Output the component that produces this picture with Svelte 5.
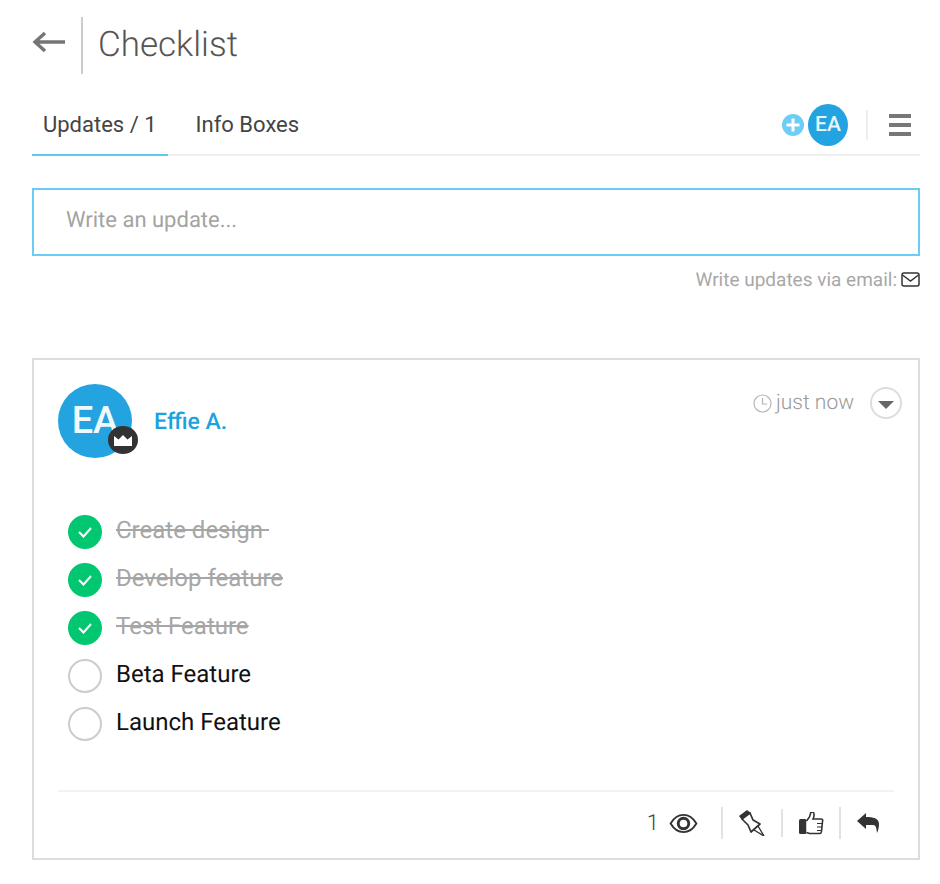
<script>
	const items = [
		{ label: 'Create design ', done: true },
		{ label: 'Develop feature', done: true },
		{ label: 'Test Feature', done: true },
		{ label: 'Beta Feature', done: false },
		{ label: 'Launch Feature', done: false }
	];
</script>

<div class="page">
	<header class="head">
		<svg class="back" width="34" height="24" viewBox="0 0 34 24" aria-hidden="true">
			<path d="M33 12H3M13 3l-10 9 10 9" fill="none" stroke="#757575" stroke-width="3.4" />
		</svg>
		<span class="head-sep"></span>
		<h1>Checklist</h1>
	</header>

	<nav class="tabs">
		<button class="tab active">Updates / 1</button>
		<button class="tab">Info Boxes</button>
		<div class="tab-tools">
			<span class="plus">
				<svg width="14" height="14" viewBox="0 0 14 14" aria-hidden="true">
					<path d="M7 0.5v13M0.5 7h13" stroke="#fff" stroke-width="3" />
				</svg>
			</span>
			<span class="avatar-sm">EA</span>
			<span class="tool-sep"></span>
			<span class="burger"><i></i><i></i><i></i></span>
		</div>
	</nav>

	<div class="composer">Write an update...</div>
	<div class="hint">
		Write updates via email:
		<svg width="19" height="15" viewBox="0 0 19 15" aria-hidden="true">
			<rect x="1" y="1" width="17" height="13" rx="2" fill="none" stroke="#333" stroke-width="1.5" />
			<path d="M1.5 3l8 6 8-6" fill="none" stroke="#333" stroke-width="1.5" />
		</svg>
	</div>

	<article class="card">
		<div class="card-top">
			<div class="avatar">
				EA
				<span class="crown">
					<svg width="18" height="11" viewBox="0 0 18 11" aria-hidden="true">
						<path d="M0 1l4.500 3.500L9 0l4.500 4.500L18 1v10H0z" fill="#fff" />
					</svg>
				</span>
			</div>
			<a class="author" href="#top">Effie A.</a>
			<div class="meta">
				<svg width="19" height="19" viewBox="0 0 19 19" aria-hidden="true">
					<circle cx="9.5" cy="9.5" r="8.5" fill="none" stroke="#b5b5b5" stroke-width="1.2" />
					<path d="M9.5 4v6h4.5" fill="none" stroke="#b5b5b5" stroke-width="1.2" />
				</svg>
				<span class="time">just now</span>
				<span class="caret"><i></i></span>
			</div>
		</div>

		<ul class="list">
			{#each items as item}
				<li class:done={item.done}>
					<span class="mark">
						{#if item.done}
							<svg width="16" height="12" viewBox="0 0 16 12" aria-hidden="true">
								<path d="M2 6l4.500 4.500L14 2" fill="none" stroke="#fff" stroke-width="2" />
							</svg>
						{/if}
					</span>
					<span class="label">{item.label}</span>
				</li>
			{/each}
		</ul>

		<footer class="actions">
			<span class="count">1</span>
			<svg class="eye" width="29" height="21" viewBox="0 0 30 22" aria-hidden="true">
				<path d="M1.5 11C5 5 10 2 15 2s10 3 13.500 9C25 17 20 20 15 20S5 17 1.500 11z" fill="none" stroke="#333" stroke-width="2" />
				<circle cx="15" cy="11" r="5.500" fill="none" stroke="#333" stroke-width="3" />
			</svg>
			<span class="sep"></span>
			<svg class="pin" width="27" height="26" viewBox="4 5 27 26" aria-hidden="true">
				<path d="M5 11l8-6 4 3-9 7z" fill="#333" />
				<path d="M8 14l8-6 3 7 7 4-9 8-3-7z" fill="#fff" stroke="#333" stroke-width="1.700" stroke-linejoin="round" />
				<path d="M20 25l10 6-6-10" fill="none" stroke="#333" stroke-width="1.400" />
			</svg>
			<span class="sep short"></span>
			<svg class="thumb" width="26" height="23" viewBox="4 5 26 23" aria-hidden="true">
				<rect x="5" y="12" width="7.500" height="15" rx="1.500" fill="#333" />
				<path d="M12.500 14l3-4 1.500-5 2.500 0.500c1 2 0.500 4.500-0.500 6.500h8c1.500 0 2 1 1.500 2.500l-1 10c-0.200 1.500-1 2-2 2h-10l-3-1" fill="#fff" stroke="#333" stroke-width="1.600" />
				<path d="M23 16.500h5.500M23 20h5M23 23.500h4.500" fill="none" stroke="#333" stroke-width="1.200" />
			</svg>
			<span class="sep"></span>
			<svg class="reply" width="24" height="22" viewBox="5 4 24 22" aria-hidden="true">
				<path d="M6 13l9-8v4c7 0 13 1 13 7 0 4-1 7-2 9-0.500-5-1-8-4-8h-7v4z" fill="#333" />
			</svg>
		</footer>
	</article>
</div>

<style>
	:global(body) {
		background: #fff;
		font-family: Roboto, 'Liberation Sans', sans-serif;
		text-rendering: geometricPrecision;
	}

	.page {
		box-sizing: border-box;
		width: 940px;
		height: 884px;
		padding: 16px 20px 0 32px;
		overflow: hidden;
	}

	.head {
		display: flex;
		align-items: center;
		height: 58px;
	}
	.back {
		margin-top: -6px;
	}
	.head-sep {
		width: 2px;
		height: 57px;
		margin: 0 15px 0 15px;
		background: #ccc;
	}
	h1 {
		margin: -1px 0 0;
		font-size: 35px;
		font-weight: 300;
		color: #555;
	}

	.tabs {
		display: flex;
		align-items: stretch;
		height: 56px;
		margin-top: 24px;
		border-bottom: 2px solid #eee;
	}
	.tab {
		margin-bottom: -2px;
		padding: 0 11px 4px;
		border: none;
		border-bottom: 2px solid transparent;
		background: none;
		font: 400 22px Roboto, sans-serif;
		color: #444;
	}
	.tab.active {
		border-bottom-color: #5fc8f0;
		margin-right: 17px;
	}
	.tab-tools {
		display: flex;
		align-items: center;
		margin-left: auto;
		padding: 0 9px 2px 0;
	}
	.plus {
		display: flex;
		align-items: center;
		justify-content: center;
		width: 22px;
		height: 22px;
		margin-right: 4px;
		border-radius: 50%;
		background: #6dcdf5;
	}
	.avatar-sm {
		display: flex;
		align-items: center;
		justify-content: center;
		width: 40px;
		height: 42px;
		border-radius: 50%;
		background: #23a4e0;
		color: #e8f5fc;
		font-size: 21px;
		font-weight: 500;
	}
	.tool-sep {
		width: 2px;
		height: 30px;
		margin: 0 21px 0 18px;
		background: #eee;
	}
	.burger {
		display: flex;
		flex-direction: column;
		gap: 5px;
	}
	.burger i {
		display: block;
		width: 22px;
		height: 4px;
		background: #777;
	}

	.composer {
		box-sizing: border-box;
		height: 68px;
		margin-top: 32px;
		padding: 0 32px 4px;
		display: flex;
		align-items: center;
		border: 2px solid #6ccbf2;
		font-size: 22px;
		font-weight: 400;
		color: #a3a3a3;
	}

	.hint {
		display: flex;
		align-items: center;
		justify-content: flex-end;
		gap: 4px;
		height: 24px;
		margin-top: 11px;
		padding-bottom: 1px;
		font-size: 19px;
		color: #a8a8a8;
	}

	.card {
		box-sizing: border-box;
		height: 502px;
		margin-top: 66px;
		padding: 24px 24px 0;
		border: 2px solid #ddd;
	}
	.card-top {
		display: flex;
		align-items: flex-start;
	}
	.avatar {
		position: relative;
		display: flex;
		align-items: center;
		justify-content: center;
		width: 74px;
		height: 74px;
		border-radius: 50%;
		background: #23a4e0;
		color: #f1f9fd;
		font-size: 38px;
		font-weight: 500;
	}
	.crown {
		position: absolute;
		right: -6px;
		bottom: 4px;
		display: flex;
		align-items: center;
		justify-content: center;
		width: 30px;
		height: 28px;
		border-radius: 50%;
		background: #333;
	}
	.author {
		margin: 24px 0 0 22px;
		font-size: 23px;
		font-weight: 500;
		color: #1ba3e0;
		text-decoration: none;
	}
	.meta {
		display: flex;
		align-items: center;
		margin: 3px -8px 0 auto;
	}
	.time {
		margin-left: 4px;
		font-size: 21px;
		font-weight: 300;
		color: #999;
	}
	.caret {
		display: flex;
		align-items: center;
		justify-content: center;
		box-sizing: border-box;
		width: 32px;
		height: 32px;
		margin-left: 16px;
		border: 2px solid #ddd;
		border-radius: 50%;
	}
	.caret i {
		display: block;
		margin-top: 3px;
		border: 8px solid transparent;
		border-top-color: #666;
		border-bottom: 0;
	}

	.list {
		margin: 48px 0 0;
		padding: 0 0 0 10px;
		list-style: none;
	}
	.list li {
		display: flex;
		align-items: center;
		height: 48px;
		font-size: 24px;
		color: #111;
	}
	.mark {
		box-sizing: border-box;
		display: flex;
		align-items: center;
		justify-content: center;
		width: 34px;
		height: 34px;
		margin-top: 4px;
		margin-right: 14px;
		border: 2px solid #ccc;
		border-radius: 50%;
	}
	.done .mark {
		border: none;
		background: #00c770;
	}
	.label {
		white-space: pre;
	}
	.done .label {
		color: #a6a6a6;
		text-decoration: line-through;
	}

	.actions {
		display: flex;
		align-items: center;
		justify-content: flex-end;
		height: 62px;
		margin-top: 44px;
		padding-right: 14px;
		border-top: 2px solid #f2f2f2;
	}
	.count {
		font-size: 22px;
		font-weight: 300;
		color: #444;
		margin-right: 10px;
	}
	.eye {
		margin-right: 23px;
	}
	.sep {
		width: 2px;
		height: 32px;
		background: #e2e2e2;
	}
	.sep.short {
		height: 28px;
	}
	.pin {
		margin: 0 16px 0 15px;
	}
	.thumb {
		margin: 0 15px;
	}
	.reply {
		margin-left: 15px;
	}
</style>
